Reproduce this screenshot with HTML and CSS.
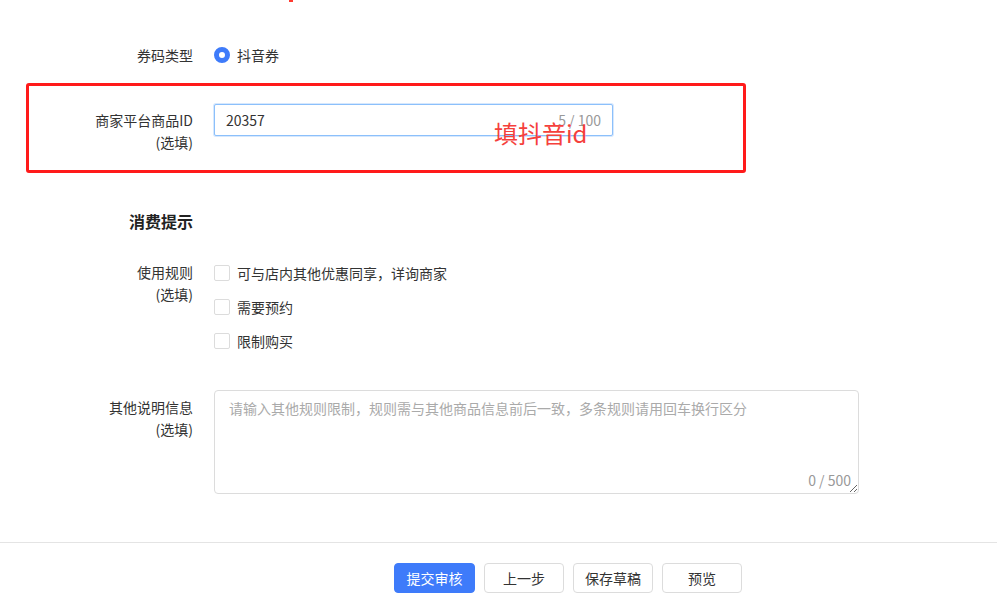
FILE: index.html
```html
<!DOCTYPE html>
<html lang="zh-CN">
<head>
  <meta charset="UTF-8">
  <meta name="viewport" content="width=device-width, initial-scale=1.0">
  <title>商品信息</title>
  <link rel="stylesheet" href="styles.css">
</head>
<body>
  <span class="mark-top"></span>

  <div class="form">
    <div class="form-row row-center">
      <div class="form-label">券码类型</div>
      <div class="form-control">
        <label class="radio">
          <span class="radio-dot"></span>
          <span>抖音券</span>
        </label>
      </div>
    </div>

    <div class="note-box">
      <div class="form-row">
        <div class="form-label">商家平台商品ID<br>(选填)</div>
        <div class="form-control">
          <div class="input-wrap">
            <input class="input" type="text" value="20357">
            <span class="count">5 / 100</span>
          </div>
        </div>
      </div>
      <span class="note-text">填抖音id</span>
    </div>

    <h3 class="section-title">消费提示</h3>

    <div class="form-row rules-row">
      <div class="form-label">使用规则<br>(选填)</div>
      <div class="form-control">
        <label class="check"><span class="check-box"></span>可与店内其他优惠同享，详询商家</label>
        <label class="check"><span class="check-box"></span>需要预约</label>
        <label class="check"><span class="check-box"></span>限制购买</label>
      </div>
    </div>

    <div class="form-row other-row">
      <div class="form-label">其他说明信息<br>(选填)</div>
      <div class="form-control">
        <div class="textarea-wrap">
          <textarea class="textarea" placeholder="请输入其他规则限制，规则需与其他商品信息前后一致，多条规则请用回车换行区分"></textarea>
          <span class="count count-area">0 / 500</span>
        </div>
      </div>
    </div>
  </div>

  <div class="footer">
    <button class="btn btn-primary">提交审核</button>
    <button class="btn">上一步</button>
    <button class="btn">保存草稿</button>
    <button class="btn">预览</button>
  </div>
</body>
</html>
```

FILE: styles.css
```css
body {
  margin: 0;
  font-family: "Noto Sans CJK SC", "Noto Sans", sans-serif;
  font-size: 14px;
  color: #333;
  background-color: #fff;
  position: relative;
  overflow: hidden;
  height: 599px;
}

.mark-top {
  position: absolute;
  left: 289px;
  top: 0;
  width: 4px;
  height: 2px;
  background-color: #ff3b30;
}

.form {
  padding-top: 39px;
}

.form-row {
  display: flex;
  align-items: flex-start;
}

.form-label {
  width: 193px;
  text-align: right;
  line-height: 22px;
  flex-shrink: 0;
}

.form-control {
  margin-left: 21px;
}

.row-center {
  align-items: center;
  height: 32px;
}

.radio {
  display: flex;
  align-items: center;
  gap: 7px;
}

.radio-dot {
  width: 16px;
  height: 16px;
  border-radius: 50%;
  box-sizing: border-box;
  border: 5px solid #3e7bfa;
  background-color: #fff;
}

/* red annotation frame */
.note-box {
  position: relative;
  margin: 12px 0 0 26px;
  width: 720px;
  height: 90px;
  box-sizing: border-box;
  border: 3px solid #ff1a1a;
  border-radius: 3px;
  padding-top: 18px;
}

.note-box .form-label {
  width: 164px;
  padding-top: 5px;
}

.note-text {
  position: absolute;
  left: 465px;
  top: 32px;
  font-size: 24px;
  line-height: 30px;
  color: #f5403c;
  font-family: "Noto Sans CJK SC", sans-serif;
}

.input-wrap {
  position: relative;
  width: 399px;
}

.input {
  width: 100%;
  height: 32px;
  box-sizing: border-box;
  border: 1px solid #8cc0fb;
  border-radius: 2px;
  padding: 0 60px 0 11px;
  font-family: inherit;
  font-size: 14px;
  color: #333;
  outline: none;
  box-shadow: 0 0 0 1px #d7e8fd;
}

.count {
  position: absolute;
  right: 12px;
  top: 0;
  line-height: 32px;
  color: #999;
}

.section-title {
  width: 193px;
  margin: 36px 0 0;
  text-align: right;
  font-size: 16px;
  line-height: 24px;
  font-weight: 700;
  color: #222;
}

.rules-row {
  margin-top: 23px;
}

.rules-row .form-label {
  padding-top: 5px;
}

.check {
  display: flex;
  align-items: center;
  gap: 7px;
  height: 34px;
}

.check-box {
  width: 16px;
  height: 16px;
  box-sizing: border-box;
  border: 1px solid #dcdcdc;
  border-radius: 2px;
  background-color: #fff;
}

.other-row {
  margin-top: 32px;
}

.other-row .form-label {
  padding-top: 6px;
}

.textarea-wrap {
  position: relative;
  width: 645px;
}

.textarea {
  display: block;
  width: 100%;
  height: 104px;
  box-sizing: border-box;
  border: 1px solid #dcdcdc;
  border-radius: 4px;
  padding: 6px 14px;
  font-family: inherit;
  font-size: 14px;
  line-height: 22px;
  color: #333;
  outline: none;
}

.textarea::placeholder {
  color: #aaa;
}

.count-area {
  top: auto;
  bottom: 3px;
  right: 8px;
  line-height: 22px;
}

.footer {
  margin-top: 48px;
  border-top: 1px solid #e4e4e4;
  padding: 20px 0 0 394px;
  display: flex;
  gap: 9px;
}

.btn {
  width: 80px;
  height: 30px;
  border: 1px solid #dcdcdc;
  border-radius: 4px;
  background-color: #fff;
  font-family: inherit;
  font-size: 14px;
  color: #333;
  cursor: pointer;
}

.btn-primary {
  width: 81px;
  border-color: #3e7bfa;
  background-color: #3e7bfa;
  color: #fff;
}
```
